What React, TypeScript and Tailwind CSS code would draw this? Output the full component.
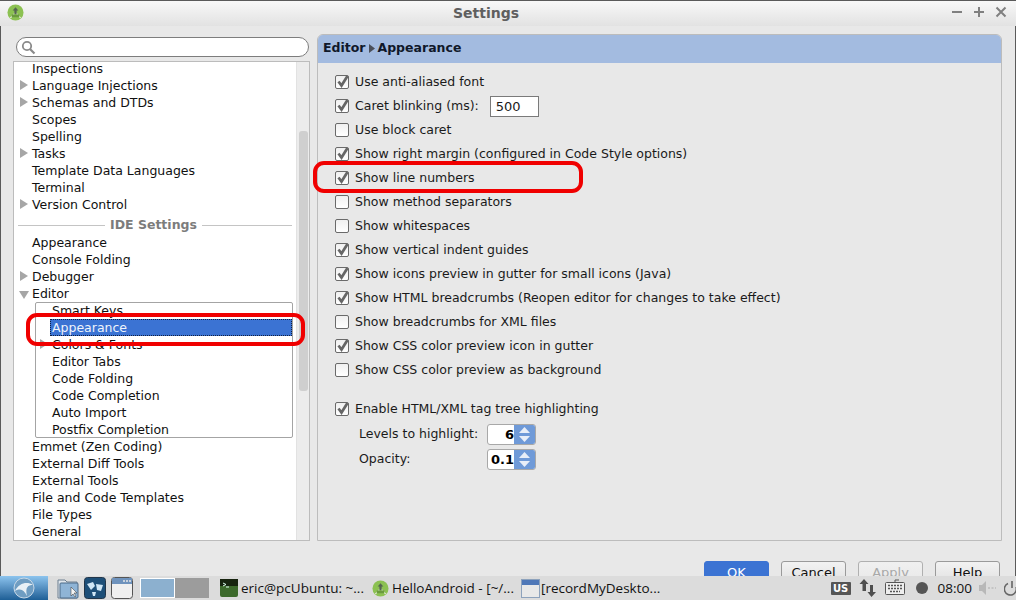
import React from "react";

const Arrow = ({ open = false, className = "" }: { open?: boolean; className?: string }) => (
  <svg width="11" height="11" viewBox="0 0 11 11" className={className}>
    {open ? <polygon points="0,2 10,2 5,10" fill="#a6a6a6" /> : <polygon points="1,0 9,5 1,10" fill="#a6a6a6" />}
  </svg>
);

const AndroidLogo = ({ size = 17 }: { size?: number }) => (
  <svg width={size} height={size} viewBox="0 0 18 18">
    <circle cx="9" cy="9" r="8.5" fill="#8cc152" />
    <path d="M3.5 15 L9 9 L14.5 15" stroke="#e6eddc" strokeWidth="1.2" fill="none" />
    <rect x="5" y="11" width="8" height="3" fill="#6b9a3e" />
    <path d="M9 3.5 L12 7 H10.2 V10.5 H7.8 V7 H6 Z" fill="#556650" />
  </svg>
);

const Check = ({ checked }: { checked: boolean }) => (
  <span className="relative inline-block w-[14px] h-[14px] rounded-[2px] border border-[#6a6a6a] bg-gradient-to-b from-[#f0f0f0] to-[#ffffff] shrink-0">
    {checked && (
      <svg width="14" height="14" viewBox="0 0 14 14" className="absolute left-0 top-[-1px]">
        <path d="M2.5 6.5 L5.5 10.5 L11.5 1" stroke="#666666" strokeWidth="2.7" fill="none" />
      </svg>
    )}
  </span>
);

const Row = ({ label, checked, cls = "" }: { label: string; checked: boolean; cls?: string }) => (
  <div className={`flex items-center h-[24px] gap-[6px] ${cls}`}>
    <Check checked={checked} />
    <span className="whitespace-nowrap">{label}</span>
  </div>
);

const TreeRow = ({ label, arrow }: { label: string; arrow?: boolean }) => (
  <div className="relative h-[17px] leading-[17px] pl-[18px] whitespace-nowrap">
    {arrow && <Arrow className="absolute left-[5px] top-[3px]" />}
    {label}
  </div>
);

const Spinner = ({ value }: { value: string }) => (
  <div className="flex h-[21px] w-[49px] rounded-[3px] border border-[#a8a8a8] overflow-hidden bg-white">
    <div className="w-[26px] text-right font-bold leading-[19px] text-[13px] text-black">{value}</div>
    <div className="ml-auto w-[21px] bg-[#6f9ad8] flex flex-col items-center justify-center gap-[3px]">
      <svg width="11" height="6" viewBox="0 0 11 6"><polygon points="5.5,0 11,6 0,6" fill="#e8eef8" /></svg>
      <svg width="11" height="6" viewBox="0 0 11 6"><polygon points="0,0 11,0 5.5,6" fill="#e8eef8" /></svg>
    </div>
  </div>
);

const Btn = ({ label, cls }: { label: string; cls: string }) => (
  <div className={`w-[65px] h-[30px] rounded-[3px] border text-center leading-[22px] text-[13px] ${cls}`}>{label}</div>
);

export default function App() {
  return (
    <div className="relative w-[1016px] h-[600px] overflow-hidden flex flex-col bg-[#e8e8e8] text-[12.5px] text-[#111] font-['DejaVu_Sans',sans-serif]">
      {/* title bar */}
      <div className="relative h-[26px] shrink-0 border-t border-[#5a5a5a] bg-gradient-to-b from-[#f8f8f8] to-[#e2e2e2] flex items-center justify-center pr-[44px]">
        <div className="absolute left-[7px] top-[3px]"><AndroidLogo /></div>
        <span className="font-bold text-[14px] text-[#5f5f5f]">Settings</span>
        <div className="absolute right-[8px] top-[4px] flex gap-[8px] items-center">
          <svg width="14" height="14" viewBox="0 0 14 14"><path d="M2 7 H12" stroke="#808080" strokeWidth="2" /></svg>
          <svg width="14" height="14" viewBox="0 0 14 14"><path d="M2 7 H12 M7 2 V12" stroke="#808080" strokeWidth="2" /></svg>
          <svg width="14" height="14" viewBox="0 0 14 14"><path d="M2.5 2.5 L11.5 11.5 M11.5 2.5 L2.5 11.5" stroke="#808080" strokeWidth="2" /></svg>
        </div>
      </div>

      {/* dialog body */}
      <div className="flex-1 min-h-0 overflow-hidden border-l border-[#5a5a5a] border-r pl-[12px] pr-[13px] pt-[8px]">
        <div className="flex h-[507px] gap-[7px]">
          {/* left */}
          <div className="w-[297px] shrink-0 flex flex-col">
            <div className="ml-[3px] mr-[1px] mt-[3px] h-[20px] rounded-full border border-[#7d7d7d] bg-white flex items-center pl-[4px] shrink-0">
              <svg width="15" height="15" viewBox="0 0 15 15">
                <circle cx="6" cy="6" r="4.2" stroke="#8a8a8a" strokeWidth="1.8" fill="none" />
                <path d="M9 9 L13.5 13.5" stroke="#8a8a8a" strokeWidth="2.2" />
              </svg>
            </div>
            <div className="mt-[4px] flex-1 flex border border-[#bcbcbc] bg-white min-h-0 overflow-hidden">
              <div className="flex-1 min-w-0 text-[#101010] mt-[-2px]">
                <TreeRow label="Inspections" />
                <TreeRow label="Language Injections" arrow />
                <TreeRow label="Schemas and DTDs" arrow />
                <TreeRow label="Scopes" />
                <TreeRow label="Spelling" />
                <TreeRow label="Tasks" arrow />
                <TreeRow label="Template Data Languages" />
                <TreeRow label="Terminal" />
                <TreeRow label="Version Control" arrow />
                <div className="flex items-center h-[21px] mt-[2px] mb-[-2px] pl-[4px] gap-[5px] pr-[4px]">
                  <div className="w-[87px] shrink-0 h-px bg-[#c4c4c4]" />
                  <span className="font-bold text-[#7c7c7c] whitespace-nowrap">IDE Settings</span>
                  <div className="flex-1 h-px bg-[#c4c4c4]" />
                </div>
                <TreeRow label="Appearance" />
                <TreeRow label="Console Folding" />
                <TreeRow label="Debugger" arrow />
                <div className="relative h-[17px] leading-[17px] pl-[18px]">
                  <Arrow open className="absolute left-[5px] top-[4px]" />
                  Editor
                </div>
                <div className="ml-[21px] mr-[3px] h-[136px] border border-[#a4a4a4] rounded-[2px]">
                  <div className="h-[16px] leading-[16px] pl-[16px]">Smart Keys</div>
                  <div className="ml-[14px] h-[17px] leading-[16px] pl-[1px] bg-[#3b73d3] text-[#eef3fb] border border-dotted border-[#10203f]">Appearance</div>
                  <div className="relative h-[17px] leading-[17px] pl-[16px]">
                    <Arrow className="absolute left-[3px] top-[3px]" />
                    Colors &amp; Fonts
                  </div>
                  <div className="h-[17px] leading-[17px] pl-[16px]">Editor Tabs</div>
                  <div className="h-[17px] leading-[17px] pl-[16px]">Code Folding</div>
                  <div className="h-[17px] leading-[17px] pl-[16px]">Code Completion</div>
                  <div className="h-[17px] leading-[17px] pl-[16px]">Auto Import</div>
                  <div className="h-[17px] leading-[17px] pl-[16px]">Postfix Completion</div>
                </div>
                <TreeRow label="Emmet (Zen Coding)" />
                <TreeRow label="External Diff Tools" />
                <TreeRow label="External Tools" />
                <TreeRow label="File and Code Templates" />
                <TreeRow label="File Types" />
                <TreeRow label="General" />
              </div>
              <div className="w-[13px] shrink-0 bg-[#ececec] border-l border-[#e2e2e2] pt-[69px]">
                <div className="ml-[2px] w-[9px] h-[260px] rounded-[3px] bg-[#cfcfcf]" />
              </div>
            </div>
          </div>

          {/* right */}
          <div className="flex-1 flex flex-col border border-[#bcbcbc] rounded-t-[6px] overflow-hidden">
            <div className="h-[28px] shrink-0 bg-[#a3bbe0] flex items-center pl-[5px] pb-[2px] font-bold text-[#10182a] gap-[3px]">
              <span>Editor</span>
              <svg width="6" height="9" viewBox="0 0 6 9"><polygon points="0,0 6,4.5 0,9" fill="#4a4f5a" /></svg>
              <span>Appearance</span>
            </div>
            <div className="flex-1 pl-[17px] pt-[7px] text-[#1a1a1a]">
              <Row label="Use anti-aliased font" checked />
              <div className="flex items-center h-[24px] gap-[6px]">
                <Check checked />
                <span>Caret blinking (ms):</span>
                <div className="ml-[5px] w-[49px] h-[21px] bg-white border border-[#7a7a7a] pl-[5px] leading-[19px] text-[13px]">500</div>
              </div>
              <Row label="Use block caret" checked={false} />
              <Row label="Show right margin (configured in Code Style options)" checked />
              <Row label="Show line numbers" checked />
              <Row label="Show method separators" checked={false} />
              <Row label="Show whitespaces" checked={false} />
              <Row label="Show vertical indent guides" checked />
              <Row label="Show icons preview in gutter for small icons (Java)" checked />
              <Row label="Show HTML breadcrumbs (Reopen editor for changes to take effect)" checked />
              <Row label="Show breadcrumbs for XML files" checked={false} />
              <Row label="Show CSS color preview icon in gutter" checked />
              <Row label="Show CSS color preview as background" checked={false} />
              <Row label="Enable HTML/XML tag tree highlighting" checked cls="mt-[15px]" />
              <div className="flex items-center h-[26px] pl-[24px]">
                <span className="w-[128px]">Levels to highlight:</span>
                <Spinner value="6" />
              </div>
              <div className="flex items-center h-[25px] pl-[24px]">
                <span className="w-[128px]">Opacity:</span>
                <Spinner value="0.1" />
              </div>
            </div>
          </div>
        </div>
        <div className="flex justify-end gap-[12px] mt-[20px] pr-[2px]">
          <Btn label="OK" cls="bg-[#3b73d3] border-[#3b73d3] text-white" />
          <Btn label="Cancel" cls="bg-gradient-to-b from-[#f2f2f2] to-[#dcdcdc] border-[#9a9a9a] text-[#111]" />
          <Btn label="Apply" cls="bg-gradient-to-b from-[#f0f0f0] to-[#e6e6e6] border-[#b0b0b0] text-[#a8a8a8]" />
          <Btn label="Help" cls="bg-gradient-to-b from-[#f2f2f2] to-[#dcdcdc] border-[#9a9a9a] text-[#111]" />
        </div>
      </div>

      {/* taskbar */}
      <div className="h-[24px] shrink-0 bg-[#dcdcdc] flex items-center text-[13.5px] text-[#111] font-['Open_Sans',sans-serif]">
        <div className="w-[48px] h-[24px] bg-gradient-to-b from-[#8cc4ee] to-[#1d5f96] flex items-center justify-center shrink-0">
          <svg width="22" height="22" viewBox="0 0 22 22">
            <circle cx="11" cy="11" r="10" fill="#6f9dc2" stroke="#c8d8e6" strokeWidth="1" />
            <path d="M2 14 C6 6 14 4 20 8 C15 8 12 10 14 19 C11 13 8 11 2 14Z" fill="#e8f0f6" />
          </svg>
        </div>
        <div className="ml-[9px] flex items-center gap-[5px] shrink-0">
          <svg width="22" height="22" viewBox="0 0 22 22">
            <path d="M1 3 H8 L10 5 H20 V21 H1Z" fill="#e0e6ec" stroke="#6d7f90" />
            <rect x="3" y="6" width="18" height="15" rx="1" fill="#8fb4d6" stroke="#4d6b88" />
            <path d="M14 10 V19 L16 17 L18 20 L19 19 L17 16 H20Z" fill="#f4f4f4" stroke="#333" strokeWidth="0.5" />
          </svg>
          <svg width="22" height="22" viewBox="0 0 22 22">
            <rect x="0.5" y="0.5" width="21" height="21" rx="3" fill="#1d4f78" stroke="#22364a" />
            <path d="M3 7 L9 5 L11 9 L7 13Z M12 7 L19 8 L17 14 L13 13Z M8 15 L12 15 L11 19 L9 19Z" fill="#cfe6f5" />
          </svg>
          <svg width="22" height="22" viewBox="0 0 22 22">
            <rect x="0.5" y="0.5" width="21" height="21" rx="3" fill="#f0f0f0" stroke="#555" />
            <rect x="1" y="1" width="20" height="6" fill="#6f93bd" />
            <path d="M12 4 H14 M15 4 H17 M18 4 H20" stroke="#e8e8e8" strokeWidth="1.5" />
          </svg>
        </div>
        <div className="ml-[7px] flex h-[20px] shrink-0">
          <div className="w-[35px] bg-[#8cb0cf] border border-white" />
          <div className="w-[34px] bg-[#9c9c9c]" />
        </div>
        <div className="ml-[11px] flex items-center gap-[3px] w-[152px] shrink-0 whitespace-nowrap">
          <svg width="18" height="18" viewBox="0 0 18 18" className="shrink-0">
            <rect width="18" height="18" rx="2" fill="#3d6a2c" />
            <rect width="18" height="7" fill="#17240f" />
            <path d="M3 4 L6 5.5 L3 7 M6 8 H9" stroke="#dfe" strokeWidth="1" fill="none" />
          </svg>
          <span>eric@pcUbuntu: ~...</span>
        </div>
        <div className="flex items-center gap-[3px] w-[149px] shrink-0 whitespace-nowrap">
          <AndroidLogo />
          <span>HelloAndroid - [~/...</span>
        </div>
        <div className="flex items-center gap-[1px] shrink-0 whitespace-nowrap">
          <svg width="19" height="19" viewBox="0 0 19 19" className="shrink-0">
            <rect x="0.5" y="0.5" width="18" height="18" fill="#e8e8e8" stroke="#8da2bc" />
            <rect x="1" y="1" width="17" height="5" fill="#4f78b8" />
          </svg>
          <span>[recordMyDeskto...</span>
        </div>
        <div className="ml-auto mr-[-2px] flex items-center shrink-0">
          <div className="w-[20px] h-[13px] bg-[#555] rounded-[1px] text-white font-bold text-[10px] leading-[13px] text-center font-['DejaVu_Sans',sans-serif]">US</div>
          <svg width="20" height="20" viewBox="0 0 20 20" className="ml-[7px]">
            <path d="M6 1 L10.5 6 H8 V13 H4.5 V6 H1.5Z M13.5 19 L9.5 14 H12 V7 H15 V14 H18Z" fill="#4e4e4e" />
          </svg>
          <svg width="22" height="18" viewBox="0 0 22 18" className="ml-[5px]">
            <rect x="2.5" y="3.5" width="19" height="12" rx="1" fill="#eee" stroke="#555" />
            <path d="M5 6.5 H19 M5 9.5 H19 M7 12.5 H17" stroke="#555" strokeWidth="1.4" strokeDasharray="2 1" />
            <path d="M12 3 V1 H16" stroke="#555" fill="none" />
          </svg>
          <div className="ml-[11px] w-[12px] h-[12px] rounded-full bg-[#555]" />
          <span className="ml-[10px]">08:00</span>
          <svg width="19" height="16" viewBox="0 0 19 16" className="ml-[6px]">
            <path d="M1 5 H4 L8 1 V15 L4 11 H1Z" fill="#b8b8b8" />
            <path d="M10 8 H18" stroke="#c4c4c4" strokeWidth="2" strokeDasharray="2 1.5" />
          </svg>
          <svg width="14" height="16" viewBox="0 0 14 16" className="ml-[7px]">
            <path d="M4 3.5 A6 6 0 1 0 12 7 M8 1 V8" stroke="#666" strokeWidth="1.6" fill="none" />
          </svg>
        </div>
      </div>

      {/* red hand-drawn annotations */}
      <div className="absolute left-[26px] top-[313px] w-[279px] h-[33px] rounded-[11px] border-[4px] border-[#f00000]" />
      <div className="absolute left-[313px] top-[161px] w-[270px] h-[32px] rounded-[11px] border-[4px] border-[#f00000]" />
    </div>
  );
}
